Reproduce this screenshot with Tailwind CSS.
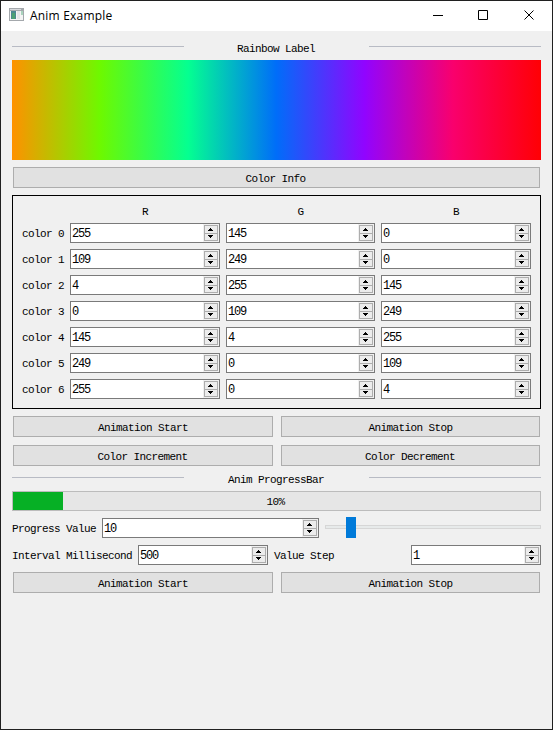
<!DOCTYPE html>
<html lang="en">
<head>
<meta charset="utf-8">
<title>Anim Example</title>
<script src="https://cdn.jsdelivr.net/npm/@tailwindcss/browser@4"></script>
</head>
<body class="bg-[#f0f0f0]">
<svg class="hidden">
  <symbol id="spin" viewBox="0 0 16 18">
    <path fill="#f0f0f0" d="M0 0h16v18H0z"/>
    <path fill="#adadad" d="M1 1h14v16H1z"/>
    <path fill="#ececec" d="M2 2h12v7H2zM2 10h12v6H2z"/>
    <path fill="#000" shape-rendering="crispEdges" d="M7 4h1v1h1v1h1v1H5V6h1V5h1zM5 11h5v1H9v1H8v1H7v-1H6v-1H5z"/>
  </symbol>
</svg>
<div class="flex h-[730px] w-[553px] flex-col border border-[#202020] bg-[#f0f0f0] font-['Liberation_Mono',monospace] text-[11px] leading-[14px] tracking-[-0.6px] whitespace-nowrap text-black">
  <header class="flex h-[30px] shrink-0 items-center bg-white pl-2">
    <svg class="mb-[3px] h-[13px] w-[15px]" viewBox="0 0 15 13" shape-rendering="crispEdges">
      <path fill="#a4a8ac" d="M0 0h15v13H0z"/><path fill="#d8dadd" d="M1 1h11v1H1z"/><path fill="#f4f4f4" d="M1 3h13v9H1z"/>
      <path fill="#4b8790" d="M2 3h5v8H2z"/><path fill="#4ca172" d="M3 5h3v6H3z"/><path fill="#e3e5e7" d="M8 3h3v8H8z"/><path fill="#a9d3bc" d="M12 3h2v4h-2z"/>
    </svg>
    <h1 class="ml-1.5 font-['Open_Sans',sans-serif] text-[12px] tracking-[0.2px]">Anim Example</h1>
    <svg class="ml-auto mr-[16px] mb-[2px] h-3 w-[103px]" viewBox="0 0 103 12" fill="none" stroke="#000">
      <path d="M0 6.5h10M45.500 1.500h9v9h-9z"/><path d="M91.500 1.500l9 9M100.500 1.500l-9 9"/>
    </svg>
  </header>
  <main class="flex flex-col px-[11px]">
    <div class="mt-[10px] flex h-[14px] items-center justify-between"><i class="mb-[3px] h-px w-[172px] bg-[#b8bbc4]"></i><span class="pt-0.5 pr-px">Rainbow Label</span><i class="mb-[3px] h-px w-[172px] bg-[#b8bbc4]"></i></div>
    <div class="mt-[5px] h-[100px] bg-[linear-gradient(to_right,rgb(255,145,0),rgb(109,249,0),rgb(4,255,145),rgb(0,109,249),rgb(145,4,255),rgb(249,0,109),rgb(255,0,4))]"></div>
    <button class="mx-px mt-[7px] h-[21px] border border-[#adadad] bg-[#e1e1e1] pt-0.5 pr-0.5 tracking-[-0.6px]">Color Info</button>
    <section class="mt-[7px] h-[214px] border border-black pl-[9px] pr-[9px]">
      <div class="mt-[9px] mb-[4px] grid h-[14px] grid-cols-[150px_149px_150px] gap-x-1.5 pl-[48px] text-center"><span>R</span><span>G</span><span>B</span></div>
      <div id="colors" class="flex flex-col gap-1.5"></div>
    </section>
    <div class="mx-px mt-[7px] grid grid-cols-[260px_259px] gap-x-2 gap-y-2">
      <button class="h-[21px] border border-[#adadad] bg-[#e1e1e1] pt-0.5 tracking-[-0.6px]">Animation Start</button>
      <button class="h-[21px] border border-[#adadad] bg-[#e1e1e1] pt-0.5 tracking-[-0.6px]">Animation Stop</button>
      <button class="h-[21px] border border-[#adadad] bg-[#e1e1e1] pt-0.5 pr-px tracking-[-0.6px]">Color Increment</button>
      <button class="h-[21px] border border-[#adadad] bg-[#e1e1e1] pt-0.5 pr-px tracking-[-0.6px]">Color Decrement</button>
    </div>
    <div class="mt-[6px] flex h-[14px] items-center justify-between"><i class="mb-[3px] h-px w-[172px] bg-[#b8bbc4]"></i><span class="pt-0.5 pr-px">Anim ProgressBar</span><i class="mb-[3px] h-px w-[172px] bg-[#b8bbc4]"></i></div>
    <div class="relative mt-[5px] h-5 border border-[#bcbcbc] bg-[#e6e6e6]">
      <div class="h-full w-[50px] bg-[#06b025]"></div>
      <span class="absolute inset-0 pr-0.5 text-center leading-[20px]">10%</span>
    </div>
    <div class="mt-[6px] flex h-[21px] items-center">
      <span class="w-[90px] pt-0.5">Progress Value</span>
      <div class="mt-px flex h-5 w-[217px] items-center justify-between border border-[#7a7a7a] bg-white pl-px"><span class="pt-px text-[12px] tracking-[-1.2px]">10</span><svg class="h-[18px] w-4"><use href="#spin"/></svg></div>
      <div class="relative mb-px ml-1.5 h-1 w-[216px] border border-[#d6d6d6] bg-[#e7eaea]"><div class="absolute -top-[9px] left-5 h-[21px] w-[10px] bg-[#007ad9]"></div></div>
    </div>
    <div class="mt-[7px] flex h-5 items-center">
      <span class="w-[126px] pt-0.5">Interval Millisecond</span>
      <div class="flex h-5 w-[130px] items-center justify-between border border-[#7a7a7a] bg-white pl-px"><span class="pt-px text-[12px] tracking-[-1.2px]">500</span><svg class="h-[18px] w-4"><use href="#spin"/></svg></div>
      <span class="ml-1.5 pt-0.5">Value Step</span>
      <div class="ml-auto flex h-5 w-[130px] items-center justify-between border border-[#7a7a7a] bg-white pl-px"><span class="pt-px text-[12px] tracking-[-1.2px]">1</span><svg class="h-[18px] w-4"><use href="#spin"/></svg></div>
    </div>
    <div class="mx-px mt-[7px] grid grid-cols-[260px_259px] gap-x-2">
      <button class="h-[21px] border border-[#adadad] bg-[#e1e1e1] pt-0.5 tracking-[-0.6px]">Animation Start</button>
      <button class="h-[21px] border border-[#adadad] bg-[#e1e1e1] pt-0.5 tracking-[-0.6px]">Animation Stop</button>
    </div>
  </main>
</div>
<script>
const colors = [[255,145,0],[109,249,0],[4,255,145],[0,109,249],[145,4,255],[249,0,109],[255,0,4]];
document.getElementById('colors').innerHTML = colors.map((c, i) =>
  `<div class="grid h-5 grid-cols-[42px_150px_149px_150px] items-center gap-x-1.5"><span class="pt-0.5">color ${i}</span>${c.map(v =>
    `<div class="flex h-5 items-center justify-between border border-[#7a7a7a] bg-white pl-px"><span class="pt-px text-[12px] tracking-[-1.2px]">${v}</span><svg class="h-[18px] w-4"><use href="#spin"/></svg></div>`).join('')}</div>`).join('');
</script>
</body>
</html>
